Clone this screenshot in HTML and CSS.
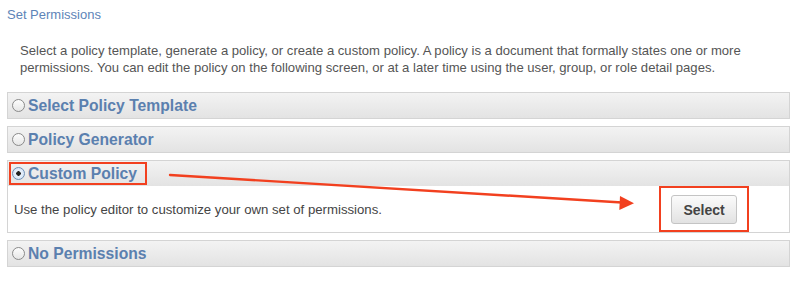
FILE: index.html
```html
<!DOCTYPE html>
<html>
<head>
<meta charset="utf-8">
<link rel="stylesheet" href="styles.css">
</head>
<body>
<div class="page">
  <div class="title">Set Permissions</div>
  <p class="intro">Select a policy template, generate a policy, or create a custom policy. A policy is a document that formally states one or more permissions. You can edit the policy on the following screen, or at a later time using the user, group, or role detail pages.</p>
  <div class="panels">
    <div class="panel">
      <div class="head"><span class="radio"></span><span class="label">Select Policy Template</span></div>
    </div>
    <div class="panel">
      <div class="head"><span class="radio"></span><span class="label">Policy Generator</span></div>
    </div>
    <div class="panel">
      <div class="head"><span class="mark"><span class="radio on"></span><span class="label">Custom Policy</span></span></div>
      <div class="body">
        <span class="desc">Use the policy editor to customize your own set of permissions.</span>
        <span class="btnbox"><button class="btn">Select</button></span>
      </div>
    </div>
    <div class="panel">
      <div class="head"><span class="radio"></span><span class="label">No Permissions</span></div>
    </div>
  </div>
  <svg class="arrow" width="800" height="281" viewBox="0 0 800 281">
    <line x1="170" y1="175" x2="622" y2="202.5" stroke="#f2401f" stroke-width="2.4" stroke-linecap="round"/>
    <polygon points="634,203.3 620,196 619.3,210" fill="#f2401f"/>
  </svg>
</div>
</body>
</html>
```
FILE: styles.css
```css
html, body { margin: 0; padding: 0; background: #fff; }
body { font-family: "Liberation Sans", Arial, Helvetica, sans-serif; }
.page { position: relative; width: 800px; height: 281px; padding: 0 10px 0 7px; box-sizing: border-box; }
.title { color: #5d84b8; font-size: 13px; line-height: 16px; padding-top: 7px; }
.intro { margin: 19px 0 0 13px; color: #555; font-size: 13.1px; line-height: 17px; }
.panels { margin-top: 16px; display: flex; flex-direction: column; gap: 7px; }
.panel { border: 1px solid #d4d4d4; background: #fff; }
.head { height: 25px; display: flex; align-items: center; padding-left: 4px; background: linear-gradient(#f3f3f3, #e3e3e3); }
.radio { width: 11px; height: 11px; border: 1px solid #8a8a8a; border-radius: 50%; background: linear-gradient(#fdfdfd, #e6e6e6); box-sizing: content-box; margin-right: 3px; display: inline-flex; align-items: center; justify-content: center; }
.radio.on { border-color: #6f8fb5; background: radial-gradient(circle, #222 0 2px, #e9f1fb 2.5px, #c8dbf2 100%); }
.label { color: #5b80af; font-weight: bold; font-size: 15.7px; line-height: 18px; }
.mark { display: inline-flex; align-items: center; border: 2px solid #f2401f; height: 19px; padding: 0 8px 0 1px; margin-left: -3px; }
.body { height: 46px; display: flex; align-items: center; justify-content: space-between; padding-left: 6px; padding-right: 40px; }
.desc { color: #444; font-size: 13.2px; }
.btnbox { border: 2px solid #f2401f; height: 42px; width: 86px; display: flex; align-items: center; justify-content: center; box-sizing: content-box; margin-top: -1px; }
.btn { width: 66px; height: 29px; border: 1px solid #c4c4c4; border-radius: 3px; background: linear-gradient(#fbfbfb, #e2e2e2); color: #444; font-family: "Liberation Sans", Arial, sans-serif; font-weight: bold; font-size: 14px; padding: 0; margin-top: 2px; }
.arrow { position: absolute; left: 0; top: 0; pointer-events: none; }
```
